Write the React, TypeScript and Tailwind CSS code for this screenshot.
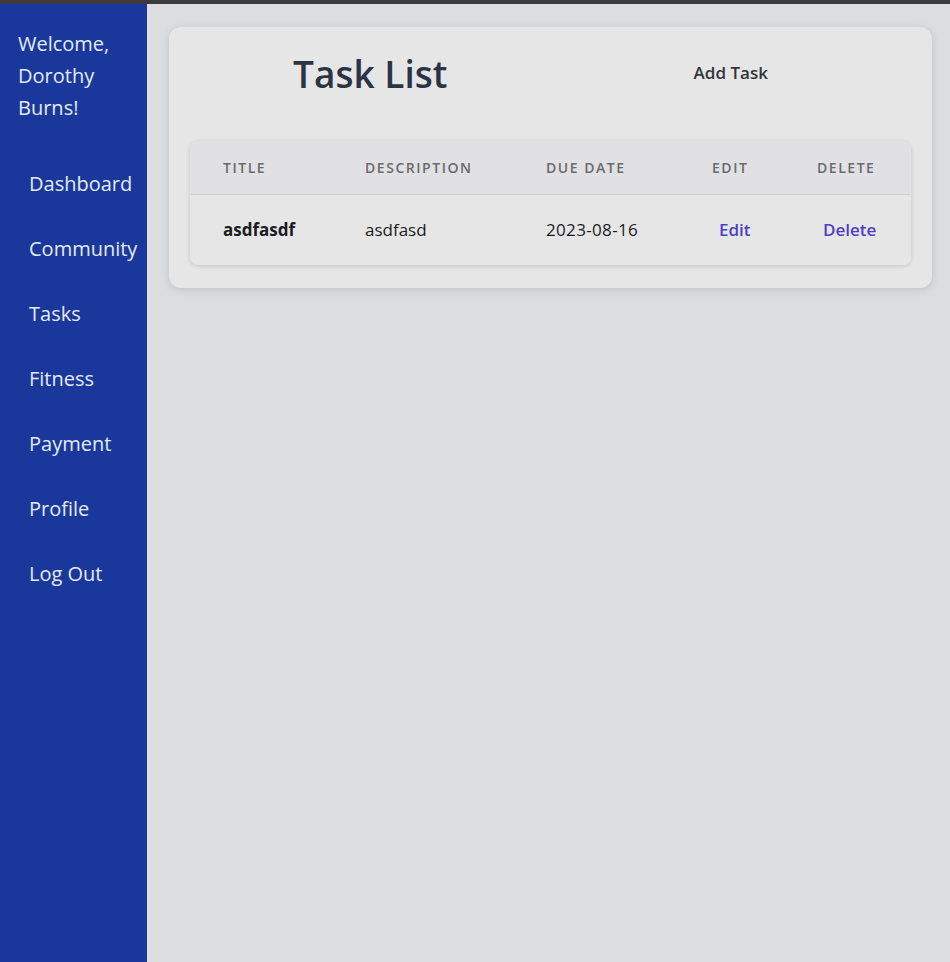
export default function App() {
  const links = ["Dashboard", "Community", "Tasks", "Fitness", "Payment", "Profile", "Log Out"];
  return (
    <div className="min-h-[962px] flex flex-col bg-[#dcdddf] font-['Open_Sans',sans-serif]">
      <div className="h-[4px] bg-[#3b3b3b]" />
      <div className="flex flex-1">
        {/* Sidebar */}
        <aside className="w-[147px] shrink-0 bg-[#1a389b] text-[#e4eaf7]">
          <div className="pl-[18px] pt-[24px] text-[20px] leading-[32px]">
            Welcome,
            <br />
            Dorothy
            <br />
            Burns!
          </div>
          <nav className="mt-[45px] flex flex-col gap-[35px] pl-[29px] text-[20px] leading-[30px]">
            {links.map((l) => (
              <a key={l} className="whitespace-nowrap">
                {l}
              </a>
            ))}
          </nav>
        </aside>

        {/* Main */}
        <main className="flex-1 pl-[22px] pr-[18px] pt-[23px]">
          <div className="bg-[#e6e6e6] rounded-[12px] shadow-[0_2px_8px_rgba(0,0,0,0.12)] px-[21px] pt-[23px] pb-[23px]">
            <div className="flex items-center h-[46px]">
              <div className="flex-1 text-center">
                <h1 className="text-[37px] font-semibold text-[#2b3445] leading-none">Task List</h1>
              </div>
              <div className="flex-1 text-center">
                <button className="text-[17px] font-semibold text-[#34343b] -mt-[6px]">Add Task</button>
              </div>
            </div>
            <div className="mt-[45px] rounded-[8px] overflow-hidden shadow-[0_1px_4px_rgba(0,0,0,0.15)]">
              <table className="w-full table-fixed text-left">
                <colgroup>
                  <col className="w-[142px]" />
                  <col className="w-[181px]" />
                  <col className="w-[166px]" />
                  <col className="w-[105px]" />
                  <col />
                </colgroup>
                <thead className="bg-[#e1e1e3]">
                  <tr className="h-[53px] border-b border-[#d0d0d2]">
                    {["Title", "Description", "Due Date", "Edit", "Delete"].map((h) => (
                      <th
                        key={h}
                        className="pl-[33px] text-[14px] font-semibold uppercase tracking-[0.11em] text-[#686b70]"
                      >
                        {h}
                      </th>
                    ))}
                  </tr>
                </thead>
                <tbody className="bg-[#e6e6e6]">
                  <tr className="h-[71px] text-[17px] text-[#1c1c1e]">
                    <td className="pl-[33px] font-bold">asdfasdf</td>
                    <td className="pl-[33px]">asdfasd</td>
                    <td className="pl-[33px] tracking-[0.02em]">2023-08-16</td>
                    <td className="pl-[40px]">
                      <button className="font-semibold text-[#4e3ec6]">Edit</button>
                    </td>
                    <td className="pl-[39px]">
                      <button className="font-semibold text-[#4e3ec6]">Delete</button>
                    </td>
                  </tr>
                </tbody>
              </table>
            </div>
          </div>
        </main>
      </div>
    </div>
  );
}
